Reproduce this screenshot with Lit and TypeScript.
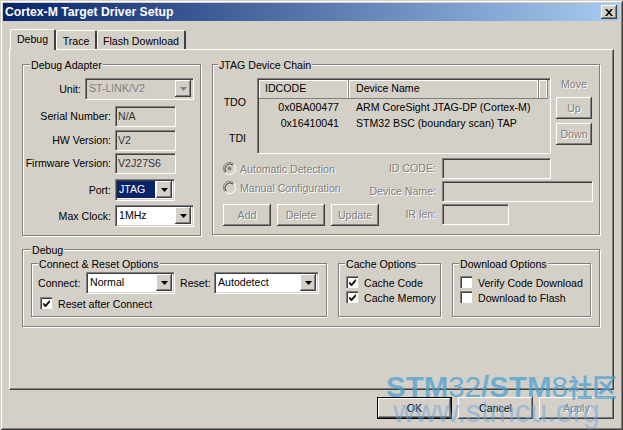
import { LitElement, html, css, svg } from "lit";
import { customElement } from "lit/decorators.js";

const arrow = svg`<svg class="arr" width="7" height="4" viewBox="0 0 7 4"><path d="M0 0h7L3.5 4z" fill="currentColor"/></svg>`;

@customElement("app-root")
export class AppRoot extends LitElement {
  static styles = css`
    :host { display: block; width: 623px; height: 430px; font: 10.6px "Liberation Sans", Arial, sans-serif; color: #000; overflow: hidden; }
    * { box-sizing: border-box; }
    .win { position: relative; width: 623px; height: 430px; background: #d4d0c8; padding: 3px 4px 0 3px; display: flex; flex-direction: column;
      box-shadow: inset 1px 1px 0 #d4d0c8, inset -1px -1px 0 #404040, inset 2px 2px 0 #fff, inset -2px -2px 0 #808080; }
    .title { height: 18px; flex: none; background: linear-gradient(90deg, #0a246a, #a6caf0); color: #fff; font: bold 12.2px "Liberation Sans", sans-serif; display: flex; align-items: center; padding: 0 2px 0 2px; justify-content: space-between; }
    .close { width: 16px; height: 14px; background: #d4d0c8; display: flex; align-items: center; justify-content: center; color: #000;
      box-shadow: inset -1px -1px 0 #404040, inset 1px 1px 0 #fff, inset -2px -2px 0 #808080; }
    .tabs { display: flex; height: 22px; margin: 6px 0 0 7px; align-items: flex-end; position: relative; z-index: 1; }
    .tab { height: 19px; padding: 4px 0 0 0; text-align: center; background: #d4d0c8; border-top: 1px solid #fff; border-left: 1px solid #fff; border-right: 2px solid #404040; border-radius: 2px 2px 0 0; white-space: nowrap; }
    .tab.on { height: 21px; padding-top: 3px; margin: 0 0 -1px 0; position: relative; }
    .pane { margin: 0 0 0 6px; width: 605px; height: 341px; flex: none; border-top: 1px solid #fff; border-left: 1px solid #fff; border-right: 1px solid #404040; border-bottom: 1px solid #404040; box-shadow: inset -1px -1px 0 #808080; padding: 14px 0 0 12px; }
    .top { display: flex; gap: 11px; }
    .group { border: 1px solid #808080; box-shadow: 1px 1px 0 #fff, inset 1px 1px 0 #fff; flex: none; }
    .legend { width: fit-content; margin: -7px 0 0 7px; padding: 0 1px; background: #d4d0c8; line-height: 14px; height: 14px; white-space: nowrap; }
    .jtag > .legend { margin-left: 5px; }
    .debug > .legend { margin-left: 8px; }
    .inner .legend { margin-left: 6px; }
    .adapter { width: 179px; height: 172px; }
    .form { display: grid; grid-template-columns: 88px 1fr; column-gap: 4px; align-items: center; padding-top: 6px; }
    .form .lbl { text-align: right; white-space: nowrap; }
    .unit { grid-column: 1 / 3; display: flex; height: 21px; align-items: center; }
    .unit .lbl { width: 58px; margin-right: 4px; }
    .sp { grid-column: 1 / 3; }
    .edit { height: 20px; background: #d4d0c8; box-shadow: inset 1px 1px 0 #808080, inset 2px 2px 0 #404040, 1px 1px 0 #fff; padding: 2px 0 0 3px; line-height: 16px; white-space: nowrap; color: #000; }
    .edit.ro { color: #333; }
    .combo { height: 21px; background: #fff; box-shadow: inset 1px 1px 0 #808080, inset 2px 2px 0 #404040, inset -1px -1px 0 #d4d0c8, 1px 1px 0 #fff; padding: 2px; display: flex; align-items: stretch; white-space: nowrap; flex: none; }
    .combo .v { flex: 1; padding: 1px 0 0 2px; line-height: 15px; }
    .combo .v.sel { background: #0a246a; color: #fff; margin-right: 1px; }
    .btn-a { width: 16px; flex: none; background: #d4d0c8; display: flex; align-items: center; justify-content: center; box-shadow: inset -1px -1px 0 #404040, inset 1px 1px 0 #fff, inset -2px -2px 0 #808080; }
    .combo.off { background: #d4d0c8; color: #808080; }
    .combo.off .btn-a { color: #808080; }
    .jtag { width: 388px; height: 171px; display: flex; flex-direction: column; }
    .chain { display: flex; padding-top: 6px; }
    .ends { width: 44px; display: flex; flex-direction: column; align-items: flex-end; padding: 18px 11px 0 0; gap: 22px; flex: none; height: 75px; }
    .ends span { display: block; height: 14px; }
    .list { width: 293px; height: 75px; flex: none; background: #d4d0c8; box-shadow: inset 1px 1px 0 #808080, inset 2px 2px 0 #404040, 1px 1px 0 #fff; padding: 2px; }
    .hdr { display: grid; grid-template-columns: 90px 190px 1fr; height: 18px; }
    .hdr div { border-right: 1px solid #808080; box-shadow: inset 1px 1px 0 #fff, inset -1px 0 0 #fff, 0 1px 0 #808080; line-height: 17px; padding-left: 6px; }
    .hdr div + div { padding-left: 7px; }
    .rows { padding-top: 1px; }
    .row { display: grid; grid-template-columns: 80px 1fr; column-gap: 17px; height: 16px; line-height: 16px; white-space: nowrap; }
    .row .id { text-align: right; }
    .move { width: 36px; margin-left: 6px; display: flex; flex-direction: column; gap: 4px; color: #808080; text-shadow: 1px 1px 0 #fff; text-align: center; flex: none; }
    .move .m { height: 15px; line-height: 12px; }
    .b { display: flex; align-items: center; justify-content: center; padding-bottom: 1px; background: #d4d0c8; box-shadow: inset -1px -1px 0 #404040, inset 1px 1px 0 #fff, inset -2px -2px 0 #808080; white-space: nowrap; flex: none; }
    .b.dis { color: #808080; text-shadow: 1px 1px 0 #fff; }
    .move .b { height: 22px; width: 36px; }
    .lower { display: flex; margin-top: 6px; padding-left: 10px; }
    .radios { width: 156px; color: #808080; text-shadow: 1px 1px 0 #fff; }
    .radio { display: flex; align-items: center; height: 19px; gap: 4px; white-space: nowrap; }
    .radio svg { flex: none; }
    .bts { display: flex; gap: 6px; margin-top: 7px; }
    .bts .b { width: 48px; height: 22px; }
    .ids { display: grid; grid-template-columns: 68px auto; column-gap: 6px; row-gap: 3px; margin: -1px 0 0 -11px; justify-content: start; align-items: center; align-content: start; }
    .ids .t { color: #808080; text-shadow: 1px 1px 0 #fff; text-align: right; white-space: nowrap; }
    .debug { width: 578px; height: 78px; margin-top: 13px; }
    .inner { display: flex; padding: 6px 0 0 8px; }
    .cr { width: 296px; height: 54px; }
    .cache { width: 103px; height: 54px; margin-left: 11px; }
    .dl { width: 139px; height: 54px; margin-left: 11px; }
    .crrow { display: flex; align-items: center; margin-top: 1px; padding-left: 6px; }
    .crrow .l1 { width: 44px; margin-right: 4px; white-space: nowrap; }
    .crrow .l2 { width: 30px; margin: 0 4px 0 6px; white-space: nowrap; }
    .chk { display: flex; align-items: center; gap: 5px; height: 15px; white-space: nowrap; }
    .chk svg { flex: none; }
    .chks { padding: 4px 0 0 7px; }
    .chks.one { padding: 3px 0 0 8px; }
    .foot { display: flex; gap: 6px; padding: 7px 0 0 374px; }
    .foot .b { width: 75px; height: 22px; }
    .foot .b.def { box-shadow: inset 0 0 0 1px #000, inset -2px -2px 0 #404040, inset 2px 2px 0 #fff, inset -3px -3px 0 #808080; }
    .mark { position: absolute; left: 386px; top: 369px; color: rgba(72, 160, 212, .72); pointer-events: none; white-space: nowrap; }
    .mark .a { font: 29.5px/28px "Liberation Sans", sans-serif; }
    .mark .a b { font-weight: bold; }
    .mark .a i { font: bold 24.5px "Noto Sans CJK SC", sans-serif; }
    .mark .w { font: 30.5px/30px "Liberation Sans", sans-serif; margin: -8px 0 0 7px; color: rgba(110, 165, 222, .55); }
  `;

  private combo(v: string, w: number, cls = "", sel = false) {
    return html`<div class="combo ${cls}" style="width:${w}px"><div class="v ${sel ? "sel" : ""}">${v}</div><div class="btn-a">${arrow}</div></div>`;
  }

  private edit(v: string, w: number, ro = false) {
    return html`<div class="edit ${ro ? "ro" : ""}" style="width:${w}px">${v}</div>`;
  }

  private check(t: string, on: boolean) {
    return html`<div class="chk"><svg width="13" height="13" viewBox="0 0 13 13"><rect width="13" height="13" fill="#fff"/><path d="M0 13V0h13" fill="none" stroke="#808080" stroke-width="2"/><path d="M1.5 12V1.5H12" fill="none" stroke="#404040"/><path d="M12.5 0v12.5H0" fill="none" stroke="#d4d0c8"/>${on ? svg`<path d="M3.5 6l2 2 4-4.5v2l-4 4.5-2-2z" fill="#000" stroke="#000" stroke-width=".6"/>` : ""}</svg><span>${t}</span></div>`;
  }

  private radio(t: string, on: boolean) {
    return html`<div class="radio"><svg width="13" height="13" viewBox="0 0 13 13"><circle cx="6.5" cy="6.5" r="6" fill="#d4d0c8"/><path d="M2.2 10.8A6 6 0 0 1 10.8 2.2" fill="none" stroke="#808080"/><path d="M3 10A5 5 0 0 1 10 3" fill="none" stroke="#404040"/><path d="M2.2 10.8A6 6 0 0 0 10.8 2.2" fill="none" stroke="#fff"/>${on ? svg`<circle cx="6.5" cy="6.5" r="2" fill="#808080"/>` : ""}</svg><span>${t}</span></div>`;
  }

  private gap(h: number) {
    return html`<div class="sp" style="height:${h}px"></div>`;
  }

  render() {
    return html`<div class="win">
      <div class="title"><span>Cortex-M Target Driver Setup</span>
        <div class="close"><svg width="8" height="7" viewBox="0 0 8 7"><path d="M0 0h2l2 2.3L6 0h2L5 3.5 8 7H6L4 4.7 2 7H0l3-3.5z" fill="#000"/></svg></div>
      </div>
      <div class="tabs"><div class="tab on" style="width:46px">Debug</div><div class="tab" style="width:41px">Trace</div><div class="tab" style="width:89px">Flash Download</div></div>
      <div class="pane">
        <div class="top">
          <div class="group adapter">
            <div class="legend">Debug Adapter</div>
            <div class="form">
              <div class="unit"><span class="lbl">Unit:</span>${this.combo("ST-LINK/V2", 108, "off")}</div>
              ${this.gap(7)}
              <div class="lbl">Serial Number:</div>${this.edit("N/A", 60, true)}
              ${this.gap(4)}
              <div class="lbl">HW Version:</div>${this.edit("V2", 60, true)}
              ${this.gap(3)}
              <div class="lbl">Firmware Version:</div>${this.edit("V2J27S6", 60, true)}
              ${this.gap(6)}
              <div class="lbl">Port:</div>${this.combo("JTAG", 59, "", true)}
              ${this.gap(5)}
              <div class="lbl">Max Clock:</div>${this.combo("1MHz", 78)}
            </div>
          </div>
          <div class="group jtag">
            <div class="legend">JTAG Device Chain</div>
            <div class="chain">
              <div class="ends"><span>TDO</span><span>TDI</span></div>
              <div class="list">
                <div class="hdr"><div>IDCODE</div><div>Device Name</div><div></div></div>
                <div class="rows">
                  <div class="row"><span class="id">0x0BA00477</span><span>ARM CoreSight JTAG-DP (Cortex-M)</span></div>
                  <div class="row"><span class="id">0x16410041</span><span>STM32 BSC (boundary scan) TAP</span></div>
                </div>
              </div>
              <div class="move"><div class="m">Move</div><div class="b dis">Up</div><div class="b dis">Down</div></div>
            </div>
            <div class="lower">
              <div>
                <div class="radios">${this.radio("Automatic Detection", true)}${this.radio("Manual Configuration", false)}</div>
                <div class="bts"><div class="b dis">Add</div><div class="b dis">Delete</div><div class="b dis">Update</div></div>
              </div>
              <div class="ids">
                <div class="t">ID CODE:</div>${this.edit("", 108)}
                <div class="t">Device Name:</div>${this.edit("", 150)}
                <div class="t">IR len:</div>${this.edit("", 66)}
              </div>
            </div>
          </div>
        </div>
        <div class="group debug">
          <div class="legend">Debug</div>
          <div class="inner">
            <div class="group cr">
              <div class="legend">Connect &amp; Reset Options</div>
              <div class="crrow"><span class="l1">Connect:</span>${this.combo("Normal", 88)}<span class="l2">Reset:</span>${this.combo("Autodetect", 104)}</div>
              <div class="chks one">${this.check("Reset after Connect", true)}</div>
            </div>
            <div class="group cache">
              <div class="legend">Cache Options</div>
              <div class="chks">${this.check("Cache Code", true)}${this.check("Cache Memory", true)}</div>
            </div>
            <div class="group dl">
              <div class="legend">Download Options</div>
              <div class="chks">${this.check("Verify Code Download", false)}${this.check("Download to Flash", false)}</div>
            </div>
          </div>
        </div>
      </div>
      <div class="foot"><div class="b def">OK</div><div class="b">Cancel</div><div class="b dis">Apply</div></div>
      <div class="mark">
        <div class="a"><b>STM</b>32<b>/STM</b>8<i>社区</i></div>
        <div class="w">www.stmcu.org</div>
      </div>
    </div>`;
  }
}
